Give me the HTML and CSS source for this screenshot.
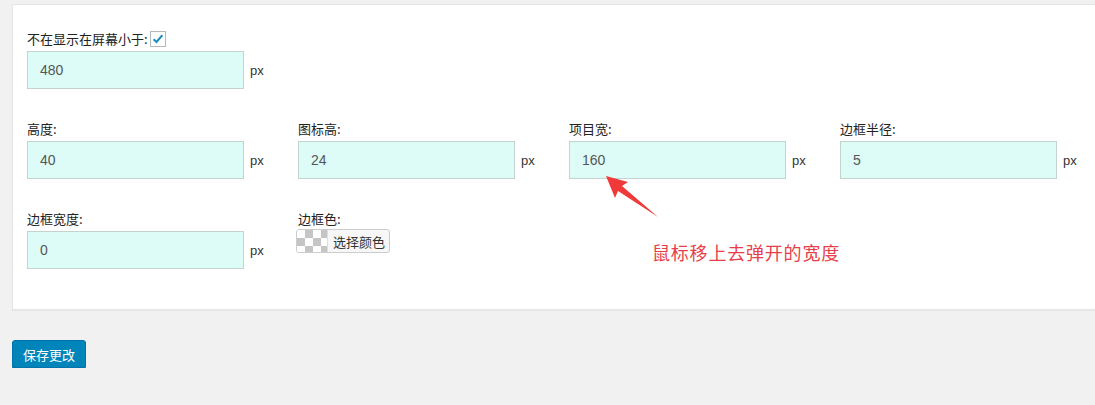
FILE: index.html
```html
<!DOCTYPE html>
<html lang="zh-CN">

<head>
    <meta charset="UTF-8">
    <meta name="viewport" content="width=device-width, initial-scale=1.0">
    <title>设置</title>
    <link rel="stylesheet" href="styles.css">
</head>

<body>
    <div class="wrap">
        <div class="panel">
            <div class="row">
                <div class="field">
                    <label class="field-label">不在显示在屏幕小于:<span class="check"><svg viewBox="0 0 16 16" width="14" height="14"><path d="M3 8.2 L6.3 11.4 L13 3.6" fill="none" stroke="#1e8cbe" stroke-width="2.4"/></svg></span></label>
                    <div class="input-row">
                        <input class="num" type="text" value="480"><span class="unit">px</span>
                    </div>
                </div>
            </div>

            <div class="row">
                <div class="field">
                    <label class="field-label">高度:</label>
                    <div class="input-row"><input class="num" type="text" value="40"><span class="unit">px</span></div>
                </div>
                <div class="field">
                    <label class="field-label">图标高:</label>
                    <div class="input-row"><input class="num" type="text" value="24"><span class="unit">px</span></div>
                </div>
                <div class="field">
                    <label class="field-label">项目宽:</label>
                    <div class="input-row"><input class="num" type="text" value="160"><span class="unit">px</span></div>
                </div>
                <div class="field">
                    <label class="field-label">边框半径:</label>
                    <div class="input-row"><input class="num" type="text" value="5"><span class="unit">px</span></div>
                </div>
            </div>

            <div class="row">
                <div class="field">
                    <label class="field-label">边框宽度:</label>
                    <div class="input-row"><input class="num" type="text" value="0"><span class="unit">px</span></div>
                </div>
                <div class="field">
                    <label class="field-label">边框色:</label>
                    <button type="button" class="color-btn"><span class="swatch"></span><span class="color-text">选择颜色</span></button>
                </div>
            </div>

            <!-- annotation over the form -->
            <svg class="arrow" width="70" height="60" viewBox="0 0 70 60">
                <polygon points="3,2 25,8 19,12 55,43 15,17 12,24" fill="#f03a3a"/>
            </svg>
            <p class="note">鼠标移上去弹开的宽度</p>
        </div>

        <button type="button" class="save-btn">保存更改</button>
    </div>
</body>

</html>
```

FILE: styles.css
```css
body {
    margin: 0;
    padding: 0;
    background-color: #f1f1f1;
    font-family: "Noto Sans CJK SC", "Liberation Sans", sans-serif;
    font-size: 13px;
    color: #222;
    overflow: hidden;
}

.wrap {
    padding: 4px 0 0 12px;
}

.panel {
    position: relative;
    background-color: #fff;
    border: 1px solid #e5e5e5;
    border-right: none;
    box-shadow: 0 1px 1px rgba(0, 0, 0, 0.04);
    padding: 25px 0 40px 14px;
    margin-right: -20px;
}

.row {
    display: flex;
    margin-bottom: 31px;
}

.row:last-of-type {
    margin-bottom: 0;
}

.field {
    width: 271px;
    flex: none;
}

.field-label {
    display: flex;
    align-items: center;
    height: 18px;
    line-height: 18px;
    margin-bottom: 3px;
    white-space: pre;
}

.check {
    display: inline-flex;
    align-items: center;
    justify-content: center;
    width: 14px;
    height: 14px;
    border: 1px solid #b4b9be;
    background-color: #fff;
    margin-left: 2px;
}

.input-row {
    display: flex;
    align-items: center;
}

.num {
    box-sizing: border-box;
    width: 217px;
    height: 38px;
    padding: 0 12px;
    border: 1px solid #c3d3cf;
    background-color: #ddfcf7;
    font-family: "Liberation Sans", sans-serif;
    font-size: 14px;
    color: #555;
    outline: none;
}

.unit {
    margin-left: 6px;
    font-family: "Liberation Sans", sans-serif;
    font-size: 13px;
    color: #333;
}

.color-btn {
    display: flex;
    align-items: stretch;
    height: 24px;
    padding: 0;
    margin-top: -2px;
    margin-left: -2px;
    border: 1px solid #ccc;
    border-radius: 3px;
    background-color: #f7f7f7;
    overflow: hidden;
    font-family: inherit;
    cursor: pointer;
}

.swatch {
    width: 30px;
    background-color: #fff;
    background-image:
        linear-gradient(45deg, #c5c5c5 25%, transparent 25%, transparent 75%, #c5c5c5 75%),
        linear-gradient(45deg, #c5c5c5 25%, transparent 25%, transparent 75%, #c5c5c5 75%);
    background-size: 16px 16px;
    background-position: 0 0, 8px 8px;
}

.color-text {
    display: flex;
    align-items: center;
    padding: 0 4px 0 5px;
    font-size: 13px;
    color: #333;
    border-left: 1px solid #ddd;
}

.arrow {
    position: absolute;
    left: 590px;
    top: 169px;
}

.note {
    position: absolute;
    left: 639px;
    top: 234px;
    margin: 0;
    font-size: 18px;
    color: #e8404a;
    letter-spacing: 0.8px;
}

.save-btn {
    margin-top: 30px;
    height: 28px;
    padding: 0 10px;
    border: 1px solid #0073aa;
    border-radius: 3px;
    background-color: #0085ba;
    color: #fff;
    font-family: inherit;
    font-size: 13px;
    box-shadow: 0 1px 0 #006799;
    cursor: pointer;
}
```
